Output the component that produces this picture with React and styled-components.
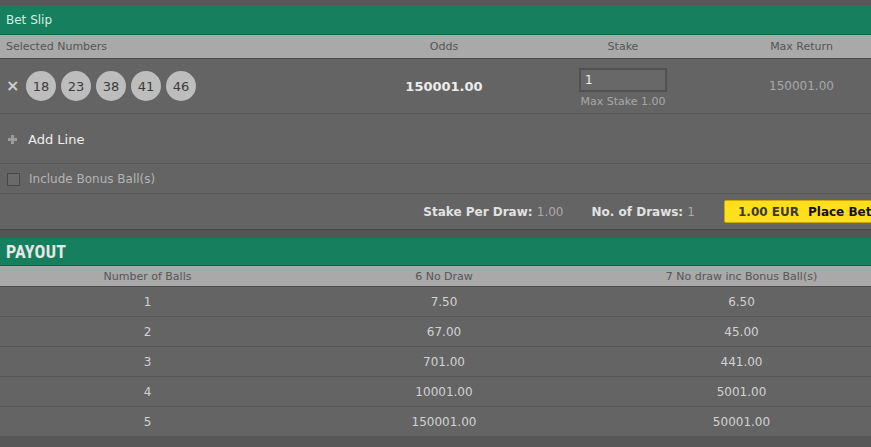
import React from 'react'
import styled, { createGlobalStyle } from 'styled-components'

const GlobalStyle = createGlobalStyle`
  html, body {
    margin: 0;
    padding: 0;
    background: #575757;
    overflow: hidden;
  }
  body {
    font-family: "DejaVu Sans", Verdana, sans-serif;
    font-size: 11px;
  }
`;

const Page = styled.div`
  width: 890px;
  padding-top: 5px;
  background: #575757;
`;

const Banner = styled.div`
  height: ${({ $big }) => ($big ? '27px' : '29px')};
  display: flex;
  align-items: center;
  padding-left: 6px;
  background: #167f5e;
  border-bottom: 1px solid #0f6448;
  color: ${({ $big }) => ($big ? '#e6e6e6' : '#d6eee3')};
  font-size: ${({ $big }) => ($big ? '18px' : '12px')};
  font-weight: ${({ $big }) => ($big ? 700 : 400)};
  font-family: ${({ $big }) => ($big ? '"Liberation Sans Narrow", "Roboto Condensed", "Liberation Sans", sans-serif' : 'inherit')};
  letter-spacing: ${({ $big }) => ($big ? '0.3px' : '0')};
`;

const Grid = styled.div`
  display: grid;
  grid-template-columns: ${({ $cols }) => $cols};
`;

const HeadRow = styled(Grid)`
  height: 23px;
  align-items: center;
  background: #a9a9a9;
  color: #555;
  border-bottom: 1px solid #4c4c4c;
`;

const HeadCell = styled.div`
  text-align: ${({ $left }) => ($left ? 'left' : 'center')};
  padding-left: ${({ $left }) => ($left ? '6px' : '0')};
`;

const Section = styled.div`
  background: #646464;
`;

const BetRow = styled(Grid)`
  height: 54px;
  align-items: center;
  border-bottom: 1px solid #555;
`;

const Numbers = styled.div`
  display: flex;
  align-items: center;
  gap: 5px;
  padding-left: 6px;
`;

const Remove = styled.span`
  color: #cfcfcf;
  font-size: 16px;
  font-weight: 700;
  width: 15px;
  line-height: 1;
`;

const Ball = styled.div`
  width: 30px;
  height: 30px;
  border-radius: 50%;
  background: #bdbdbd;
  color: #3c3c3c;
  font-size: 13px;
  display: flex;
  align-items: center;
  justify-content: center;
`;

const Odds = styled.div`
  text-align: center;
  font-weight: 700;
  font-size: 13px;
  color: #ececec;
`;

const StakeCell = styled.div`
  display: flex;
  flex-direction: column;
  align-items: center;
  gap: 3px;
  padding-top: 3px;
`;

const StakeInput = styled.div`
  width: 80px;
  height: 20px;
  border: 2px solid #515151;
  background: #686868;
  color: #eee;
  font-size: 12px;
  display: flex;
  align-items: center;
  padding-left: 4px;
`;

const Muted = styled.div`
  color: #a8a8a8;
  text-align: ${({ $center }) => ($center ? 'center' : 'left')};
  font-size: ${({ $size }) => $size || '11px'};
`;

const LineRow = styled.div`
  height: ${({ $h }) => $h}px;
  display: flex;
  align-items: center;
  gap: ${({ $gap }) => $gap || 10}px;
  padding-left: ${({ $pad }) => $pad || 7}px;
  border-bottom: 1px solid #555;
  color: ${({ $color }) => $color};
  font-size: ${({ $size }) => $size || '12px'};
  padding-top: 1px;
`;

const Checkbox = styled.span`
  width: 11px;
  height: 11px;
  border: 1px solid #474747;
  background: #6a6a6a;
`;

const SummaryRow = styled.div`
  height: 35px;
  display: flex;
  align-items: center;
  justify-content: flex-end;
  border-bottom: 1px solid #474747;
  color: #ddd;
  font-size: 12px;
`;

const Stat = styled.span`
  margin-right: ${({ $mr }) => $mr}px;
  font-weight: 700;
  color: #e2e2e2;
  span {
    font-weight: 400;
    color: #aaa;
  }
`;

const BetButton = styled.div`
  width: 166px;
  height: 23px;
  background: #ffdf1b;
  border: 1px solid #c9a800;
  border-radius: 2px;
  display: flex;
  align-items: center;
  padding-left: 13px;
  gap: 9px;
  font-weight: 700;
  font-size: 12px;
  color: #111;
  box-sizing: border-box;
  span {
    color: #3a3a3a;
  }
`;

const Spacer = styled.div`
  height: 8px;
  background: #545454;
`;

const PayHead = styled(HeadRow)`
  height: 20px;
`;

const PayRow = styled(Grid)`
  height: 29px;
  align-items: center;
  border-bottom: 1px solid #555;
  color: #d2d2d2;
  font-size: 12px;
`;

const PayCell = styled.div`
  text-align: center;
`;

const betCols = '355px 178px 180px 177px';
const payCols = '295px 298px 297px';

const payout = [
  ['1', '7.50', '6.50'],
  ['2', '67.00', '45.00'],
  ['3', '701.00', '441.00'],
  ['4', '10001.00', '5001.00'],
  ['5', '150001.00', '50001.00'],
];

const Plus = () => (
  <svg width="9" height="9" viewBox="0 0 9 9">
    <path d="M3 0h3v3h3v3H6v3H3V6H0V3h3z" fill="#9c9c9c" />
  </svg>
);

export default function App() {
  return (
    <Page>
      <GlobalStyle />
      <Banner>Bet Slip</Banner>
      <HeadRow $cols={betCols}>
        <HeadCell $left>Selected Numbers</HeadCell>
        <HeadCell>Odds</HeadCell>
        <HeadCell>Stake</HeadCell>
        <HeadCell>Max Return</HeadCell>
      </HeadRow>
      <Section>
        <BetRow $cols={betCols}>
          <Numbers>
            <Remove>×</Remove>
            {['18', '23', '38', '41', '46'].map((n) => (
              <Ball key={n}>{n}</Ball>
            ))}
          </Numbers>
          <Odds>150001.00</Odds>
          <StakeCell>
            <StakeInput>1</StakeInput>
            <Muted>Max Stake 1.00</Muted>
          </StakeCell>
          <Muted $center $size="12px">150001.00</Muted>
        </BetRow>
        <LineRow $h={48} $gap={11} $pad={8} $color="#eee" $size="13px">
          <Plus />
          Add Line
        </LineRow>
        <LineRow $h={28} $gap={9} $color="#b4b4b4" $size="12px">
          <Checkbox />
          Include Bonus Ball(s)
        </LineRow>
        <SummaryRow>
          <Stat $mr={28}>Stake Per Draw: <span>1.00</span></Stat>
          <Stat $mr={29}>No. of Draws: <span>1</span></Stat>
          <BetButton>
            <span>1.00 EUR</span> Place Bet
          </BetButton>
        </SummaryRow>
      </Section>
      <Spacer />
      <Banner $big>PAYOUT</Banner>
      <PayHead $cols={payCols}>
        <HeadCell>Number of Balls</HeadCell>
        <HeadCell>6 No Draw</HeadCell>
        <HeadCell>7 No draw inc Bonus Ball(s)</HeadCell>
      </PayHead>
      <Section>
        {payout.map((row) => (
          <PayRow key={row[0]} $cols={payCols}>
            <PayCell>{row[0]}</PayCell>
            <PayCell>{row[1]}</PayCell>
            <PayCell>{row[2]}</PayCell>
          </PayRow>
        ))}
      </Section>
    </Page>
  );
}
